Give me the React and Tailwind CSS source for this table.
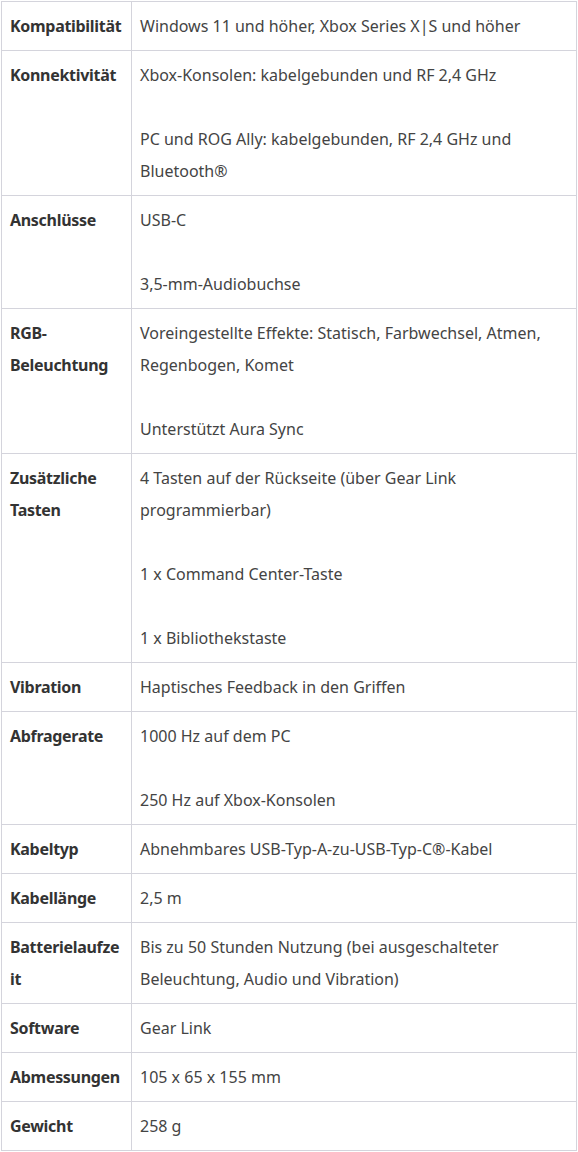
import React from 'react';

const rows = [
    { label: 'Kompatibilität', values: ['Windows 11 und höher, Xbox Series X|S und höher'] },
    { label: 'Konnektivität', values: ['Xbox-Konsolen: kabelgebunden und RF 2,4 GHz', 'PC und ROG Ally: kabelgebunden, RF 2,4 GHz und Bluetooth®'] },
    { label: 'Anschlüsse', values: ['USB-C', '3,5-mm-Audiobuchse'] },
    { label: 'RGB-Beleuchtung', values: ['Voreingestellte Effekte: Statisch, Farbwechsel, Atmen, Regenbogen, Komet', 'Unterstützt Aura Sync'] },
    { label: 'Zusätzliche Tasten', values: ['4 Tasten auf der Rückseite (über Gear Link programmierbar)', '1 x Command Center-Taste', '1 x Bibliothekstaste'] },
    { label: 'Vibration', values: ['Haptisches Feedback in den Griffen'] },
    { label: 'Abfragerate', values: ['1000 Hz auf dem PC', '250 Hz auf Xbox-Konsolen'] },
    { label: 'Kabeltyp', values: ['Abnehmbares USB-Typ-A-zu-USB-Typ-C®-Kabel'] },
    { label: 'Kabellänge', values: ['2,5 m'] },
    // Zeilenumbruch wie im Original nach "Batterielaufze"
    { label: 'Batterielaufze\u200Bit', values: ['Bis zu 50 Stunden Nutzung (bei ausgeschalteter Beleuchtung, Audio und Vibration)'] },
    { label: 'Software', values: ['Gear Link'] },
    { label: 'Abmessungen', values: ['105 x 65 x 155 mm'] },
    { label: 'Gewicht', values: ['258 g'] },
];

export default function App() {
    return (
        <div className="w-[578px] bg-white pt-px pl-px text-[16px] leading-[32px] text-[#444]" style={{ fontFamily: '"Noto Sans", "Open Sans", sans-serif' }}>
            <table className="w-[576px] table-fixed border-collapse border border-[#d4d4dc]">
                <colgroup>
                    <col className="w-[130px]" />
                    <col />
                </colgroup>
                <tbody>
                    {rows.map((row) => (
                        <tr key={row.label}>
                            {/* Bezeichnung */}
                            <td className="border border-[#d4d4dc] pl-[8px] pr-[7px] py-2 align-top font-bold text-[#333] tracking-[-0.3px] break-words">
                                {row.label}
                            </td>
                            {/* Werte */}
                            <td className="border border-[#d4d4dc] pl-2 pr-2 py-2 align-top">
                                {row.values.map((v, i) => (
                                    <p key={i} className={i > 0 ? 'mt-8' : ''}>{v}</p>
                                ))}
                            </td>
                        </tr>
                    ))}
                </tbody>
            </table>
        </div>
    );
}
